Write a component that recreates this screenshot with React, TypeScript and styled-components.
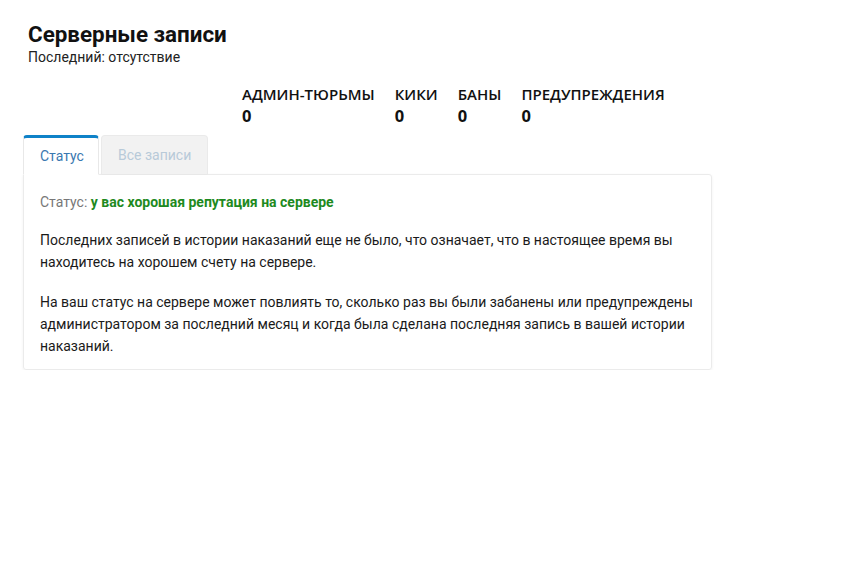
import React from 'react';
import styled, { createGlobalStyle } from 'styled-components';

const GlobalStyle = createGlobalStyle`
  html, body {
    margin: 0;
    padding: 0;
    background: #fff;
  }
  body {
    font-family: Roboto, "Liberation Sans", sans-serif;
    color: #111;
  }
`;

const StyledPage = styled.div`
  padding: 21px 0 0 23px;
  width: 689px;
`;

const StyledHeader = styled.header`
  padding-left: 5px;
`;

const StyledTitle = styled.h1`
  margin: 0;
  font-size: 22.4px;
  line-height: 26px;
  font-weight: 700;
  color: #111;
`;

const StyledSubtitle = styled.div`
  margin-top: 2px;
  font-size: 14px;
  line-height: 16px;
  color: #222;
`;

const StyledStats = styled.div`
  display: flex;
  gap: 20px;
  margin: 19px 0 0 219px;
  font-family: "Open Sans", "Noto Sans", sans-serif;
`;

const StyledStat = styled.div`
  display: flex;
  flex-direction: column;
`;

const StyledStatLabel = styled.span`
  font-size: 15px;
  line-height: 20px;
  font-weight: 600;
  color: #111;
`;

const StyledStatValue = styled.span`
  font-size: 16.5px;
  line-height: 22px;
  font-weight: 700;
  color: #111;
  margin-top: 1px;
`;

const StyledTabs = styled.div`
  display: flex;
  gap: 2px;
  margin-top: 8px;
  position: relative;
  z-index: 1;
`;

const StyledTab = styled.button<{ $active?: boolean }>`
  height: 40px;
  padding: 0 16px;
  margin-bottom: -1px;
  font-family: Roboto, "Liberation Sans", sans-serif;
  font-size: 14px;
  border: 1px solid ${p => (p.$active ? '#e8e8e8' : '#eaeaea')};
  border-bottom: ${p => (p.$active ? '1px solid #fff' : '1px solid #e8e8e8')};
  border-top: ${p => (p.$active ? '3px solid #0f82c8' : '1px solid #eaeaea')};
  border-radius: 4px 4px 0 0;
  background: ${p => (p.$active ? '#fff' : '#f2f2f2')};
  color: ${p => (p.$active ? '#3a78b0' : '#b8cad9')};
  cursor: pointer;
  &:first-child {
    width: 76px;
  }
`;

const StyledCard = styled.section`
  border: 1px solid #ebebeb;
  border-radius: 0 3px 3px 3px;
  box-shadow: 0 1px 3px rgba(0, 0, 0, 0.06);
  padding: 16px 16px 12px 16px;
  font-size: 14px;
  line-height: 22px;
  color: #1a1a1a;
`;

const StyledStatus = styled.div`
  color: #777;
  margin-bottom: 16px;
`;

const StyledGood = styled.strong`
  color: #1e8a1e;
  font-weight: 700;
`;

const StyledParagraph = styled.p`
  margin: 0 0 18px;
  &:last-child {
    margin-bottom: 0;
  }
`;

const stats = [
  { label: 'АДМИН-ТЮРЬМЫ', value: 0 },
  { label: 'КИКИ', value: 0 },
  { label: 'БАНЫ', value: 0 },
  { label: 'ПРЕДУПРЕЖДЕНИЯ', value: 0 },
];

const App = () => {
  const [tab, setTab] = React.useState<'status' | 'all'>('status');
  return (
    <>
      <GlobalStyle />
      <StyledPage>
        <StyledHeader>
          <StyledTitle>Серверные записи</StyledTitle>
          <StyledSubtitle>Последний: отсутствие</StyledSubtitle>
        </StyledHeader>
        <StyledStats>
          {stats.map(s => (
            <StyledStat key={s.label}>
              <StyledStatLabel>{s.label}</StyledStatLabel>
              <StyledStatValue>{s.value}</StyledStatValue>
            </StyledStat>
          ))}
        </StyledStats>
        <StyledTabs>
          <StyledTab $active={tab === 'status'} onClick={() => setTab('status')}>Статус</StyledTab>
          <StyledTab $active={tab === 'all'} onClick={() => setTab('all')}>Все записи</StyledTab>
        </StyledTabs>
        <StyledCard>
          <StyledStatus>
            Статус: <StyledGood>у вас хорошая репутация на сервере</StyledGood>
          </StyledStatus>
          <StyledParagraph>
            Последних записей в истории наказаний еще не было, что означает, что в настоящее время вы
            находитесь на хорошем счету на сервере.
          </StyledParagraph>
          <StyledParagraph>
            На ваш статус на сервере может повлиять то, сколько раз вы были забанены или предупреждены
            администратором за последний месяц и когда была сделана последняя запись в вашей истории
            наказаний.
          </StyledParagraph>
        </StyledCard>
      </StyledPage>
    </>
  );
};

export default App;
